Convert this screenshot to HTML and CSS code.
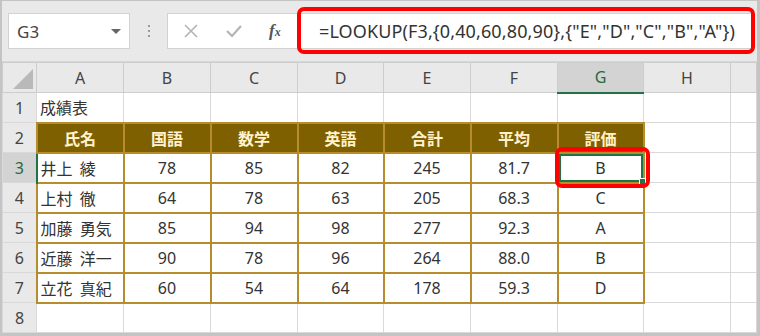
FILE: index.html
```html
<!DOCTYPE html>
<html lang="ja">
<head>
    <meta charset="UTF-8">
    <title>成績表</title>
    <link rel="stylesheet" href="styles.css">
</head>
<body>
    <div class="window">
        <div class="toolbar">
            <div class="namebox">
                <span>G3</span>
                <span class="arrow"></span>
            </div>
            <div class="dots"><i></i><i></i><i></i></div>
            <div class="formula">
                <div class="buttons">
                    <svg width="16" height="16" viewBox="0 0 16 16"><path d="M2 2 L14 14 M14 2 L2 14" stroke="#b4b4b4" stroke-width="1.6" fill="none"/></svg>
                    <svg width="18" height="16" viewBox="0 0 18 16"><path d="M2 8 L7 13 L16 3" stroke="#b4b4b4" stroke-width="2.2" fill="none"/></svg>
                    <span class="fx">f<small>x</small></span>
                </div>
                <div class="formula-text">=LOOKUP(F3,{0,40,60,80,90},{"E","D","C","B","A"})</div>
            </div>
        </div>

        <table class="sheet">
            <colgroup>
                <col style="width:34px">
                <col style="width:87px"><col style="width:87px"><col style="width:87px"><col style="width:86px">
                <col style="width:87px"><col style="width:87px"><col style="width:86px"><col style="width:87px">
                <col>
            </colgroup>
            <tr class="colhead">
                <th class="corner"><span class="tri"></span></th>
                <th>A</th><th>B</th><th>C</th><th>D</th><th>E</th><th>F</th><th class="active">G</th><th>H</th><th></th>
            </tr>
            <tr>
                <th class="rowhead">1</th>
                <td class="name">成績表</td><td></td><td></td><td></td><td></td><td></td><td></td><td></td><td></td>
            </tr>
            <tr class="head">
                <th class="rowhead">2</th>
                <td>氏名</td><td>国語</td><td>数学</td><td>英語</td><td>合計</td><td>平均</td><td>評価</td><td class="plain"></td><td class="plain"></td>
            </tr>
            <tr class="data">
                <th class="rowhead active">3</th>
                <td class="name">井上 綾</td><td>78</td><td>85</td><td>82</td><td>245</td><td>81.7</td><td class="selected">B<span class="handle"></span></td><td class="plain"></td><td class="plain"></td>
            </tr>
            <tr class="data">
                <th class="rowhead">4</th>
                <td class="name">上村 徹</td><td>64</td><td>78</td><td>63</td><td>205</td><td>68.3</td><td>C</td><td class="plain"></td><td class="plain"></td>
            </tr>
            <tr class="data">
                <th class="rowhead">5</th>
                <td class="name">加藤 勇気</td><td>85</td><td>94</td><td>98</td><td>277</td><td>92.3</td><td>A</td><td class="plain"></td><td class="plain"></td>
            </tr>
            <tr class="data">
                <th class="rowhead">6</th>
                <td class="name">近藤 洋一</td><td>90</td><td>78</td><td>96</td><td>264</td><td>88.0</td><td>B</td><td class="plain"></td><td class="plain"></td>
            </tr>
            <tr class="data">
                <th class="rowhead">7</th>
                <td class="name">立花 真紀</td><td>60</td><td>54</td><td>64</td><td>178</td><td>59.3</td><td>D</td><td class="plain"></td><td class="plain"></td>
            </tr>
            <tr>
                <th class="rowhead">8</th>
                <td></td><td></td><td></td><td></td><td></td><td></td><td></td><td></td><td></td>
            </tr>
        </table>
    </div>
</body>
</html>
```

FILE: styles.css
```css
body {
    margin: 0;
    padding: 0;
    background-color: white;
    font-family: "Noto Sans", "Noto Sans CJK JP", sans-serif;
}
.window {
    width: 760px;
    height: 336px;
    box-sizing: border-box;
    border: 2px solid #c4c4c4;
    border-top-width: 1px;
    border-right-width: 3px;
    border-bottom-width: 3px;
    background-color: #e9e9e9;
    overflow: hidden;
}

/* Toolbar */
.toolbar {
    height: 61px;
    display: flex;
    align-items: center;
    padding-left: 6px;
    border-bottom: 1px solid #d6d6d6;
    box-sizing: border-box;
}
.namebox {
    width: 122px;
    height: 36px;
    box-sizing: border-box;
    background-color: white;
    border: 1px solid #d2d2d2;
    display: flex;
    align-items: center;
    justify-content: space-between;
    padding: 0 8px 0 8px;
    font-size: 17px;
    color: #444;
}
.arrow {
    width: 0;
    height: 0;
    border-left: 5px solid transparent;
    border-right: 5px solid transparent;
    border-top: 5px solid #666;
}
.dots {
    width: 37px;
    display: flex;
    flex-direction: column;
    align-items: center;
    gap: 3px;
}
.dots i {
    width: 2px;
    height: 2px;
    background-color: #9a9a9a;
}
.formula {
    flex: 1;
    height: 36px;
    margin-right: 2px;
    display: flex;
}
.buttons {
    width: 130px;
    box-sizing: border-box;
    background-color: white;
    border: 1px solid #d2d2d2;
    border-right: none;
    display: flex;
    align-items: center;
    padding-left: 15px;
    gap: 26px;
}
.fx {
    font-family: "Liberation Serif", serif;
    font-style: italic;
    font-weight: bold;
    font-size: 17px;
    color: #555;
}
.fx small {
    font-size: 12px;
}
.formula-text {
    flex: 1;
    position: relative;
    background-color: white;
    border-top: 1px solid #d2d2d2;
    border-bottom: 1px solid #d2d2d2;
    display: flex;
    align-items: center;
    padding-left: 22px;
    font-size: 18px;
    color: #333;
    letter-spacing: 0.12px;
}
.formula-text::after {
    content: "";
    position: absolute;
    left: 0;
    right: 0;
    top: -7px;
    bottom: -6px;
    border: 4px solid #ff0000;
    border-radius: 7px;
}

/* Sheet */
.sheet {
    width: 755px;
    table-layout: fixed;
    border-collapse: collapse;
    background-color: white;
    font-size: 16px;
    color: #333;
}
.sheet tr {
    height: 30px;
}
.sheet th,
.sheet td {
    border: 1px solid #d9d9d9;
    padding: 0;
    text-align: center;
    white-space: nowrap;
    overflow: hidden;
}
.colhead th {
    background-color: #e9e9e9;
    border-color: #cdcdcd;
    font-weight: normal;
    font-size: 16px;
    color: #444;
}
.colhead th.active {
    background-color: #d3d3d3;
    color: #1e6b3f;
    border-bottom: 2px solid #217346;
}
.corner {
    position: relative;
}
.tri {
    position: absolute;
    right: 3px;
    bottom: 3px;
    width: 0;
    height: 0;
    border-left: 20px solid transparent;
    border-bottom: 20px solid #b9b9b9;
}
.rowhead {
    background-color: #e9e9e9;
    border-color: #cdcdcd;
    font-weight: normal;
    color: #444;
}
.rowhead.active {
    background-color: #d3d3d3;
    color: #1e6b3f;
    border-right: 2px solid #217346;
}
.sheet td.name {
    text-align: left;
    padding-left: 3px;
    word-spacing: 3px;
}
.head td,
.data td {
    border: 2px solid #b58d2c;
}
.head td {
    background-color: #7f6000;
    color: #fff2cc;
    font-weight: bold;
}
.sheet td.plain {
    border-top-color: #d9d9d9;
    border-right-color: #d9d9d9;
    border-bottom-color: #d9d9d9;
    border-width: 1px;
}
.head td.plain {
    background-color: white;
}
.sheet td.selected {
    position: relative;
    overflow: visible;
}
.selected::before {
    content: "";
    position: absolute;
    inset: 0;
    border: 2px solid #217346;
}
.selected::after {
    content: "";
    position: absolute;
    z-index: 1;
    left: -4px;
    right: -7px;
    top: -7px;
    bottom: -6px;
    border: 4px solid #ff0000;
    border-radius: 7px;
}
.handle {
    position: absolute;
    right: -3px;
    bottom: -3px;
    width: 5px;
    height: 5px;
    background-color: #217346;
    border: 1px solid white;
}
```
